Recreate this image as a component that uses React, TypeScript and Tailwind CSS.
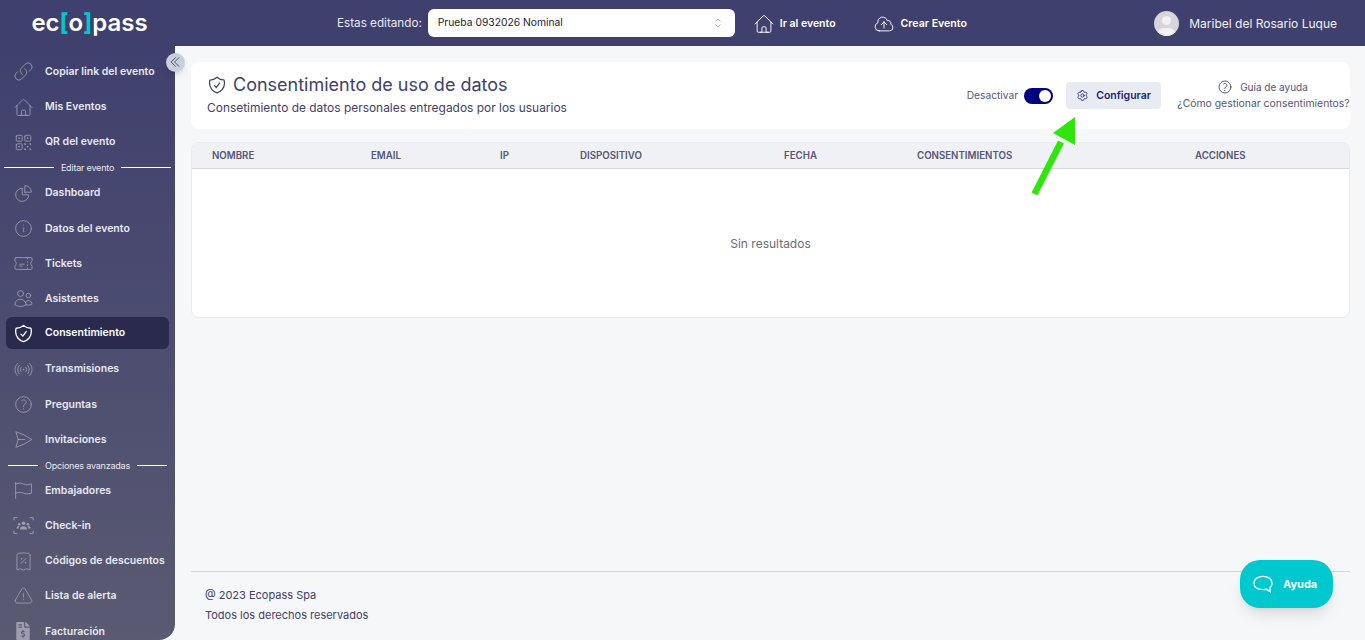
import React from 'react';
import {
  HiOutlineLink,
  HiOutlineHome,
  HiOutlineQrCode,
  HiOutlineChartPie,
  HiOutlineInformationCircle,
  HiOutlineTicket,
  HiOutlineUsers,
  HiOutlineShieldCheck,
  HiOutlineSignal,
  HiOutlineQuestionMarkCircle,
  HiOutlinePaperAirplane,
  HiOutlineFlag,
  HiOutlineReceiptPercent,
  HiOutlineExclamationTriangle,
  HiOutlineCog6Tooth,
  HiOutlineCloudArrowUp,
  HiOutlineChevronUpDown,
  HiOutlineChevronDoubleLeft,
} from 'react-icons/hi2';
import { FaFileInvoiceDollar } from 'react-icons/fa';

function CheckInIcon({ className }: { className?: string }) {
  return (
    <svg viewBox="0 0 24 24" fill="none" stroke="currentColor" strokeWidth="1.1" className={className}>
      <path d="M1 6V3h4M19 3h4v3M23 18v3h-4M5 21H1v-3" />
      <circle cx="12" cy="9.5" r="2" fill="currentColor" stroke="none" />
      <circle cx="7" cy="10.5" r="1.5" fill="currentColor" stroke="none" />
      <circle cx="17" cy="10.5" r="1.5" fill="currentColor" stroke="none" />
      <path d="M8 16.5c0-2.5 1.500-3.700 4-3.700s4 1.200 4 3.700zM4 15.500c0-2 1-2.800 3-2.800l.5.2c-.8.7-1 1.600-1 2.600zM20 15.500c0-2-1-2.800-3-2.800l-.5.2c.8.7 1 1.600 1 2.600z" fill="currentColor" stroke="none" />
    </svg>
  );
}

function NavItem({ icon: Icon, label, active, small }: { icon: React.ElementType; label: string; active?: boolean; small?: boolean }) {
  return (
    <div className="h-[35.2px] shrink-0 flex items-center">
      <div className={`h-8 w-[163px] ml-[6px] rounded-md flex items-center ${active ? 'bg-[#2a2a4e] text-white mb-[2px]' : 'text-[#e6e8f2]'}`}>
        <span className={`w-[34px] mr-[5px] flex justify-center ${active ? 'text-white' : 'text-[#9d9dae]'}`}>
          <Icon className={small ? 'w-[18px] h-[18px]' : 'w-[21px] h-[21px]'} style={{ strokeWidth: active ? 1.5 : 1 }} />
        </span>
        <span className="text-[10.5px] font-semibold whitespace-nowrap">{label}</span>
      </div>
    </div>
  );
}

function NavDivider({ label, inset }: { label: string; inset: string }) {
  return (
    <div className={`h-[15.8px] shrink-0 flex items-center gap-[7px] ${inset}`}>
      <div className="flex-1 h-px bg-white" />
      <span className="text-[9px] tracking-[-0.2px] leading-none text-[#e6e8f2] whitespace-nowrap">{label}</span>
      <div className="flex-1 h-px bg-white" />
    </div>
  );
}

const columns = ['NOMBRE', 'EMAIL', 'IP', 'DISPOSITIVO', 'FECHA', 'CONSENTIMIENTOS', 'ACCIONES'];

export default function App() {
  return (
    <div className="relative h-screen overflow-hidden flex flex-col bg-[#f6f7f9] text-[#40406e] font-['Inter',sans-serif]">
      <header className="h-[46px] shrink-0 bg-[#40406e] flex items-center pt-[1px] text-white">
        <div className="w-[175px] shrink-0 flex justify-center">
          <span className="text-[24px] font-semibold leading-none -mt-[2px] ml-[4px]">
            ec<span className="text-[#00c8cf] font-bold">[</span>o<span className="text-[#00c8cf] font-bold">]</span>pass
          </span>
        </div>
        <span className="ml-[162px] text-[11.7px] text-[#e6e8f2] whitespace-nowrap">Estas editando:</span>
        <div className="ml-[6px] w-[307px] h-[28px] -mt-[1px] bg-white rounded-md flex items-center justify-between px-[10px] text-[#1c1c30]">
          <span className="text-[10.3px]">Prueba 0932026 Nominal</span>
          <HiOutlineChevronUpDown className="w-[14px] h-[14px] text-[#9a9aa8]" />
        </div>
        <HiOutlineHome className="ml-[18px] w-[22px] h-[22px]" style={{ strokeWidth: 1 }} />
        <span className="ml-[5px] text-[10.5px] font-semibold whitespace-nowrap">Ir al evento</span>
        <HiOutlineCloudArrowUp className="ml-[37px] w-[22px] h-[22px]" style={{ strokeWidth: 1 }} />
        <span className="ml-[6px] text-[10.6px] font-semibold whitespace-nowrap">Crear Evento</span>
        <div className="ml-auto mr-[28px] flex items-center gap-[10px]">
          <div className="relative w-[25px] h-[25px] rounded-full bg-[#d5d5db] overflow-hidden">
            <div className="absolute left-[8px] top-[5px] w-[9px] h-[9px] rounded-full bg-[#f1f1f4]" />
            <div className="absolute left-[3px] top-[17px] w-[19px] h-[14px] rounded-full bg-[#f1f1f4]" />
          </div>
          <span className="text-[12px] text-[#f0f0f6] whitespace-nowrap">Maribel del Rosario Luque</span>
        </div>
      </header>

      <div className="flex-1 min-h-0 flex">
        <aside className="w-[175px] shrink-0 rounded-br-2xl overflow-hidden bg-gradient-to-b from-[#40406e] to-[#5a5a72] pt-[8.400px] flex flex-col">
          <NavItem icon={HiOutlineLink} label="Copiar link del evento" />
          <NavItem icon={HiOutlineHome} label="Mis Eventos" />
          <NavItem icon={HiOutlineQrCode} label="QR del evento" />
          <NavDivider label="Editar evento" inset="px-[4px]" />
          <NavItem icon={HiOutlineChartPie} label="Dashboard" />
          <NavItem icon={HiOutlineInformationCircle} label="Datos del evento" />
          <NavItem icon={HiOutlineTicket} label="Tickets" />
          <NavItem icon={HiOutlineUsers} label="Asistentes" />
          <NavItem icon={HiOutlineShieldCheck} label="Consentimiento" active />
          <NavItem icon={HiOutlineSignal} label="Transmisiones" />
          <NavItem icon={HiOutlineQuestionMarkCircle} label="Preguntas" />
          <NavItem icon={HiOutlinePaperAirplane} label="Invitaciones" />
          <NavDivider label="Opciones avanzadas" inset="px-[8px]" />
          <NavItem icon={HiOutlineFlag} label="Embajadores" />
          <NavItem icon={CheckInIcon} label="Check-in" />
          <NavItem icon={HiOutlineReceiptPercent} label="Códigos de descuentos" />
          <NavItem icon={HiOutlineExclamationTriangle} label="Lista de alerta" />
          <NavItem icon={FaFileInvoiceDollar} label="Facturación" small />
        </aside>

        <main className="flex-1 min-w-0 pl-4 pr-[15px] pt-4 flex flex-col">
          <section className="h-[67px] shrink-0 bg-white rounded-lg flex items-center pl-4">
            <div>
              <div className="flex items-center gap-[6px] -mt-[3px]">
                <HiOutlineShieldCheck className="w-[20px] h-[20px]" />
                <h1 className="text-[18px] leading-[24px] text-[#40406e]">Consentimiento de uso de datos</h1>
              </div>
              <p className="text-[11.95px] leading-[16px] mt-[3px] text-[#40406e]">Consetimiento de datos personales entregados por los usuarios</p>
            </div>
            <div className="ml-auto flex items-center">
              <span className="text-[10.2px] text-[#55557a]">Desactivar</span>
              <div className="ml-[6px] w-[29px] h-4 rounded-full bg-[#000080] relative">
                <div className="absolute right-[2px] top-[2px] w-3 h-3 rounded-full bg-white" />
              </div>
              <button className="ml-[13px] w-[95px] h-[27px] rounded bg-[#e8ebf2] flex items-center justify-center gap-[7px] text-[#1d1d78] text-[10.5px] font-semibold">
                <HiOutlineCog6Tooth className="w-[13px] h-[13px]" />
                Configurar
              </button>
              <div className="ml-[16px] w-[173px] -mt-[1px] text-center text-[10.4px] leading-[16px] text-[#55557a]">
                <div className="flex items-center justify-center gap-[7px] pr-[2px]">
                  <HiOutlineQuestionMarkCircle className="w-[16px] h-[16px]" />
                  <span className="text-[10px]">Guía de ayuda</span>
                </div>
                <div className="whitespace-nowrap pt-[1px]">¿Cómo gestionar consentimientos?</div>
              </div>
            </div>
          </section>

          <section className="mt-[13px] h-[176px] shrink-0 bg-white rounded-lg border border-[#e8eaee] overflow-hidden flex flex-col">
            <div className="h-[26px] shrink-0 bg-[#eff1f4] border-b border-[#d5d8df] grid grid-cols-[159px_129px_80px_204px_133px_278px_1fr] pl-[20px] pt-[1px] items-center">
              {columns.map((c) => (
                <span key={c} className="text-[9.7px] font-semibold text-[#55557a]">{c}</span>
              ))}
            </div>
            <div className="flex-1 flex items-center justify-center pt-[1px] text-[12px] text-[#6b6b7b]">Sin resultados</div>
          </section>

          <footer className="mt-auto h-[69px] shrink-0 border-t border-[#d4d5da] pl-[14px] pt-[13px] text-[11px] leading-[20px] text-[#40406e]">
            <div>@ 2023 Ecopass Spa</div>
            <div>Todos los derechos reservados</div>
          </footer>
        </main>
      </div>

      <div className="absolute left-[165.5px] top-[52.5px] w-[19px] h-[19px] rounded-full bg-[#c8d0dc] shadow-md flex items-center justify-center text-[#40406e]">
        <HiOutlineChevronDoubleLeft className="w-[14px] h-[14px]" />
      </div>

      <svg className="absolute left-[1025px] top-[112px] w-[60px] h-[90px]" viewBox="0 0 60 90">
        <path d="M9.500 82L36 30" stroke="#2ee60a" strokeWidth="6.500" fill="none" />
        <path d="M50 5L28 21L50 33Z" fill="#2ee60a" />
      </svg>

      <div className="absolute left-[1240px] top-[560px] w-[93px] h-[48px] rounded-[20px] bg-[#00c8cf] shadow-lg flex items-center gap-[9px] pl-[13px] text-white">
        <svg viewBox="0 0 22 20" fill="none" stroke="currentColor" strokeWidth="1.4" className="w-[21px] h-[19px]">
          <path d="M10.500 1.500c5 0 9.500 2.500 9.500 7.200 0 2.400-.9 3.900-2.300 5l.4 4-3.800-2.700c-1.200.3-2.400.4-3.800.4C5 15.400 1 13 1 8.400 1 4 5.500 1.500 10.500 1.500z" />
        </svg>
        <span className="text-[11px] font-bold">Ayuda</span>
      </div>
    </div>
  );
}
